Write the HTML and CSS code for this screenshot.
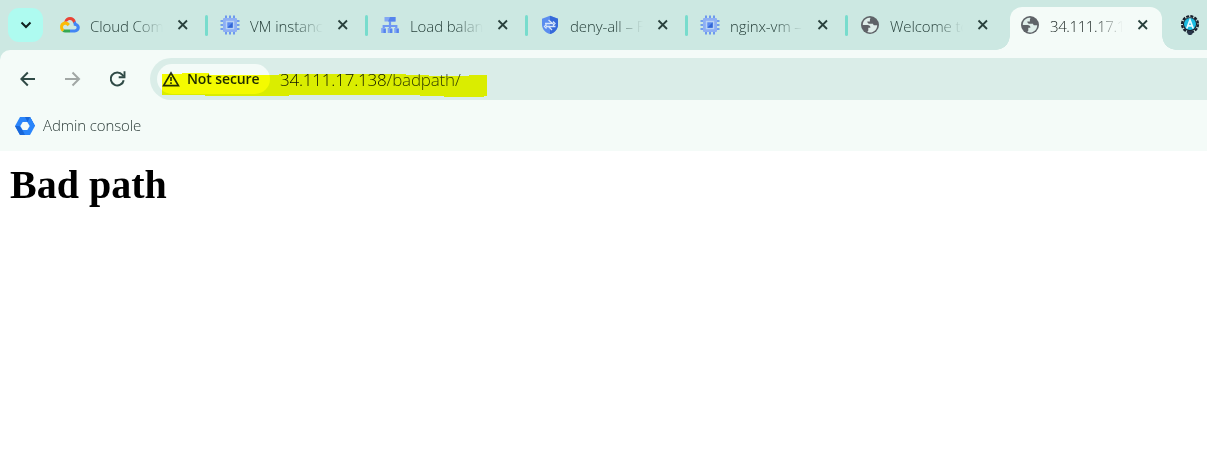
FILE: index.html
```
<!DOCTYPE html>
<html lang="en">
<head>
<meta charset="utf-8">
<title>Bad path</title>
<link rel="stylesheet" href="styles.css">
</head>
<body>
<svg class="defs" width="0" height="0" aria-hidden="true">
  <symbol id="chip" viewBox="0 0 20 20">
    <path d="M6 .5v19M10 .5v19M14 .5v19M.5 6h19M.5 10h19M.5 14h19" stroke="#5585f0" stroke-width="1.600"/>
    <rect x="3" y="3" width="14" height="14" rx="1" fill="#8eaff4"/>
    <rect x="5.800" y="5.800" width="8.400" height="8.400" fill="#b9d3f3"/>
    <rect x="7.300" y="7.300" width="5.400" height="5.400" fill="#5d8bf0"/>
    <path d="M12.700 7.300v5.400H7.300z" fill="#3367d6"/>
  </symbol>
  <symbol id="globe" viewBox="0 0 20 20">
    <circle cx="10" cy="10" r="9" fill="#5f6368"/>
    <path class="land" d="M9.300 2.800C5.500 3.200 2.800 6.200 2.800 10h4.700c1.900 0 2.900 1 2.900 2.700H8.300v2.200c0 1-.6 1.700-1.400 1.900 4.900 2.200 10.300-1.300 10.300-6.600h-2.700c-.8 0-1.500-.6-1.500-1.500H10c-1.600 0-2.700-.9-2.700-2.300h2.600V4.600c0-.8.200-1.300.8-1.700-.5-.1-.9-.1-1.400-.1z"/>
  </symbol>
  <symbol id="close" viewBox="0 0 12 12">
    <path d="M1.500 1.500l8.500 8.500M10 1.500L1.500 10" stroke="currentColor" stroke-width="1.800"/>
  </symbol>
</svg>

<header class="browser">
  <div class="tabstrip">
    <div class="tab-search"><svg width="12" height="8" viewBox="0 0 12 8"><path d="M1.500 1.500L6 6l4.500-4.500" fill="none" stroke="#10201e" stroke-width="2"/></svg></div>
    <div class="tab">
      <svg class="favicon" viewBox="0 0 20 20">
        <path d="M4.200 7C5 3.500 7.200 2 10 2c3 0 5 1.700 5.800 4.500L13.300 8.300C12.600 5.700 11.500 4.900 10 4.900c-1.300 0-2.300.6-2.900 1.700z" fill="#ea4335"/>
        <path d="M13.200 8l2.400-2.100c.4.900.6 1.500.7 2.200 2 .7 3.500 2.300 3.500 4.500 0 2.800-2.200 4.900-5 4.900H10v-3.100h4.700c1.100 0 1.900-.8 1.900-1.800 0-1.200-.8-1.900-2-1.900h-.8c0-1.200-.1-2-.6-2.700z" fill="#4285f4"/>
        <path d="M5.200 14.400H10v3.100H5.200c-1.200 0-2-.3-2.900-.9l2.200-2.400z" fill="#34a853"/>
        <path d="M5.200 6.600c2 0 3.700.9 4.700 2.500l-2.200 2.200C7.100 10.200 6.200 9.700 5.200 9.700c-1.200 0-2.200 1-2.200 2.300 0 1.100.6 1.900 1.600 2.300l-2.300 2.400C.9 15.700.1 14 .1 12c0-3 2.200-5.400 5.100-5.400z" fill="#fbbc05"/>
      </svg>
      <span class="title">Cloud Compute</span><svg class="close"><use href="#close"/></svg>
    </div>
    <div class="tab"><svg class="favicon"><use href="#chip"/></svg><span class="title">VM instances</span><svg class="close"><use href="#close"/></svg></div>
    <div class="tab">
      <svg class="favicon" viewBox="0 0 20 20">
        <path d="M10 6v5M3.700 15v-4h12.600v4M10 10v5" fill="none" stroke="#6f98f2" stroke-width="2.200"/>
        <path d="M4.500 2h11v4.500h-11z" fill="#82a7f3"/><path d="M10 2h5.500v4.500H8z" fill="#5584ed"/>
        <path d="M1.200 13h4.600v5H1.200zM7.700 13h4.600v5H7.700zM14.200 13h4.600v5h-4.600z" fill="#82a7f3"/>
        <path d="M3.500 14h2.300v4H3.500zM10 14h2.300v4H10zM16.500 14h2.300v4h-2.300z" fill="#5584ed"/>
      </svg>
      <span class="title">Load balancing</span><svg class="close"><use href="#close"/></svg>
    </div>
    <div class="tab">
      <svg class="favicon" viewBox="0 0 20 20">
        <path d="M10 .8l8 3v6c0 4.400-3.400 7.900-8 9.300-4.600-1.400-8-4.900-8-9.300v-6z" fill="#5b8def"/>
        <path d="M10 .8l8 3v6c0 4.400-3.400 7.900-8 9.300z" fill="#3569d9"/>
        <path d="M5 8.500h8.500M8.500 5l4 3.500M15.500 11.500H6M12 15L8.500 11.500M6.500 9.500l-2 2 2 2M13 6.500l2 2-2 2" fill="none" stroke="#d5e5fa" stroke-width="1.300"/>
      </svg>
      <span class="title">deny-all – Firewall</span><svg class="close"><use href="#close"/></svg>
    </div>
    <div class="tab"><svg class="favicon"><use href="#chip"/></svg><span class="title">nginx-vm – VM</span><svg class="close"><use href="#close"/></svg></div>
    <div class="tab before-active"><svg class="favicon"><use href="#globe"/></svg><span class="title">Welcome to nginx</span><svg class="close"><use href="#close"/></svg></div>
    <div class="tab active"><svg class="favicon"><use href="#globe"/></svg><span class="title ip">34.111.17.138</span><svg class="close"><use href="#close"/></svg></div>
    <div class="tab cut">
      <svg class="favicon" viewBox="0 0 20 20">
        <circle cx="10" cy="9.200" r="8" fill="none" stroke="#18202d" stroke-width="2.200" stroke-dasharray="3 1.200"/>
        <circle cx="10" cy="9.200" r="7" fill="#18202d"/><circle cx="10" cy="9" r="6" fill="#19bbe0"/>
        <path d="M7.500 16h5v3l-1.500 1H9l-1.500-1z" fill="#29364a"/>
        <path d="M6.800 13.500L10 5l3.200 8.500M8 10.800h4" fill="none" stroke="#e4fbff" stroke-width="1.800"/>
      </svg>
    </div>
  </div>

  <div class="toolbar">
    <div class="nav">
      <svg width="16" height="16" viewBox="0 0 16 16"><path d="M15 8H1.500M7.800 1.500L1.300 8l6.500 6.500" fill="none" stroke="#2f4a46" stroke-width="2"/></svg>
      <svg width="16" height="16" viewBox="0 0 16 16"><path d="M0 8h13.500M7.500 1.500L14 8l-6.500 6.500" fill="none" stroke="#a1a7a5" stroke-width="2"/></svg>
      <svg width="16" height="16" viewBox="0 0 16 16"><path d="M13.700 9.200A6.500 6.500 0 1 1 12.400 3.900L13.700 5.200" fill="none" stroke="#2f4a46" stroke-width="2"/><path d="M14.500 .3v6H8.700" fill="none" stroke="#2f4a46" stroke-width="1.900"/></svg>
    </div>
    <div class="omnibox">
      <div class="security">
        <svg width="18" height="16" viewBox="0 0 18 16"><path d="M9 2L16.400 14.600H1.600z" fill="none" stroke="#26302c" stroke-width="1.700"/><path d="M9 6v4M9 11.200v1.700" stroke="#26302c" stroke-width="1.600"/></svg>
        <span>Not secure</span>
      </div>
      <div class="url">34.111.17.138<span>/badpath/</span></div>
      <svg class="marker" width="327" height="26" viewBox="0 0 327 26"><path d="M1 2H21V1H48V3H118V2H245V3H268V4H308V3H326V24H323V25H283V24H259V23H128V24H44V23H1z" fill="#ff0"/></svg>
    </div>
  </div>

  <div class="bookmarks">
    <svg width="20" height="20" viewBox="0 0 20 20"><path d="M5 1h10l5 9-5 9H5l-5-9z" fill="#2a85fb"/><path d="M10 1h5l5 9h-4.500l-3-4zM10 19H5l-5-9h4.500l3 4z" fill="#1967d9"/><path d="M15 1l5 9h-5l-2.500-4z" fill="#2a85fb"/><path d="M7.700 6h4.600l2.400 4-2.400 4H7.700l-2.400-4z" fill="#f4fbf8"/></svg>
    <span>Admin console</span>
  </div>
</header>
<main class="page"><h1>Bad path</h1></main>
</body>
</html>
```
FILE: styles.css
```
* { box-sizing: border-box; }
body { margin: 0; background: #fff; overflow: hidden; font-family: "Open Sans", "Noto Sans", sans-serif; }
svg { display: block; flex: none; }
.defs { position: absolute; }
.browser { overflow: hidden; background: #cce8e2; }
.tabstrip { display: flex; height: 50px; padding-left: 8px; }
.tab-search { display: flex; align-items: center; justify-content: center; flex: none; width: 35px; height: 34px; margin: 8px 7px 0 0; border-radius: 11px; background: #aefbf0; }
.tab { position: relative; display: flex; align-items: center; flex: none; width: 160px; height: 43px; margin-top: 7px; padding: 0 0 7px 10px; color: #27403b; }
.tab::after { content: ""; position: absolute; left: 155px; top: 8px; width: 3px; height: 21px; border-radius: 2px; background: #78dccd; }
.before-active::after, .cut::after { display: none; }
.cut { width: 37px; }
.favicon { width: 20px; height: 20px; }
.land { fill: #dfeeea; }
.title { width: 73px; margin: 1px 14px 0 10px; overflow: hidden; white-space: nowrap; font-size: 15px; line-height: 22px; font-weight: 300; letter-spacing: -0.1px; -webkit-mask-image: linear-gradient(90deg, #000 62%, transparent 100%); mask-image: linear-gradient(90deg, #000 62%, transparent 100%); }
.ip { letter-spacing: -0.4px; }
.close { width: 12px; height: 12px; color: #29403c; }
.active { width: 152px; margin-right: 8px; border-radius: 12px 12px 0 0; background: #f4fbf8; color: #1a2422; }
.active::before, .active::after { content: ""; display: block; position: absolute; top: auto; bottom: 0; width: 14px; height: 14px; border-radius: 0; }
.active::before { left: -14px; background: radial-gradient(circle at 0 0, transparent 13.5px, #f4fbf8 14px); }
.active::after { left: 152px; background: radial-gradient(circle at 100% 0, transparent 13.5px, #f4fbf8 14px); }
.toolbar { display: flex; height: 50px; padding-top: 8px; border-radius: 10px 0 0 0; background: #f4fbf8; }
.nav { display: flex; align-items: center; gap: 29px; width: 150px; padding-left: 20px; flex: none; }
.omnibox { position: relative; display: flex; align-items: center; flex: 1; height: 42px; padding-left: 7px; border-radius: 21px 0 0 21px; background: #daede8; }
.security { display: flex; align-items: center; gap: 7px; width: 113px; height: 30px; padding-left: 5px; border-radius: 15px; background: #f4fbf8; color: #1f2a27; font-size: 14px; font-weight: 600; letter-spacing: -0.1px; white-space: nowrap; }
.security span { margin-top: -1px; }
.url { margin: 2px 0 0 10px; font-size: 17px; line-height: 24px; font-weight: 300; letter-spacing: -0.2px; color: #10150f; white-space: nowrap; }
.url span { color: #35403c; }
.marker { position: absolute; left: 11px; top: 14px; mix-blend-mode: multiply; }
.bookmarks { display: flex; align-items: center; gap: 8px; height: 51px; padding-left: 15px; background: #f4fbf8; color: #2c3c39; font-size: 15px; font-weight: 300; letter-spacing: -0.1px; }
.bookmarks span { margin-top: -2px; }
.page { padding: 10px; }
.page h1 { margin: 0; font: bold 40px/48px "Liberation Serif", serif; color: #000; }
```
